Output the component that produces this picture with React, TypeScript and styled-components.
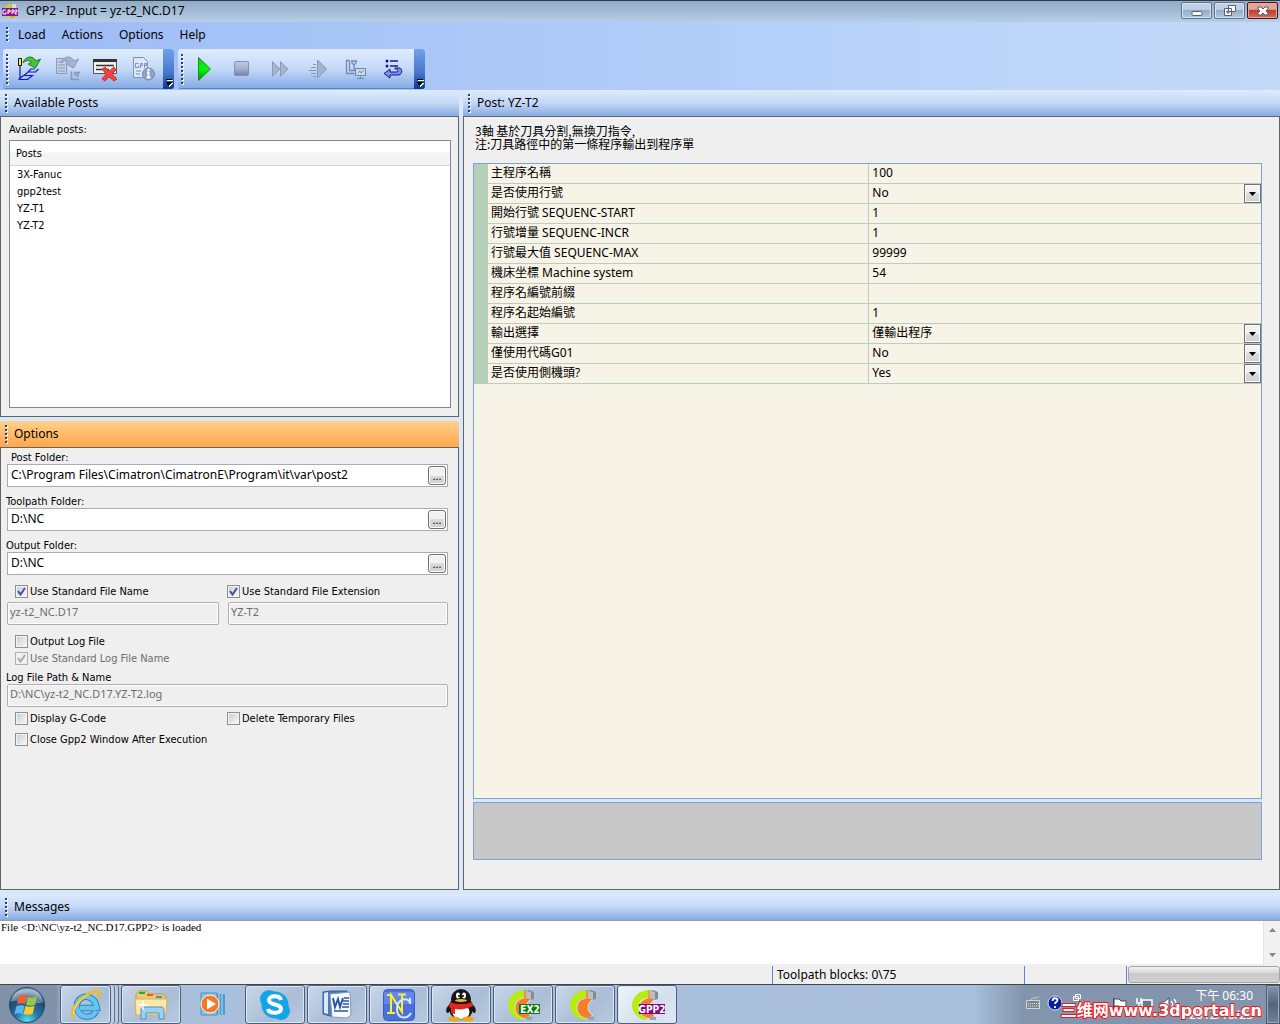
import React from "react";
import styled, { createGlobalStyle, css } from "styled-components";

const uiFont = `"Noto Sans", "Noto Sans CJK TC", sans-serif`;
const labelFont = `"DejaVu Sans Condensed", "Noto Sans CJK TC", sans-serif`;
const cjkFont = `"Noto Sans CJK TC", sans-serif`;

const GlobalStyle = createGlobalStyle`
  *, *::before, *::after { box-sizing: border-box; }
  body { margin: 0; background: #efefef; color: #000; font: 12px/16px ${uiFont}; }
  button, input, select { font: inherit; color: inherit; margin: 0; padding: 0; border: 0; border-radius: 0; }
  svg { display: block; }
`;

const Screen = styled.div`
  min-height: 100vh;
  display: flex;
  flex-direction: column;
`;

/* ---------- title bar ---------- */
const TitleBar = styled.header`
  height: 22px;
  flex: none;
  display: flex;
  align-items: flex-start;
  gap: 6px;
  padding: 1px 2px 0 0;
  border-top: 1px solid #36383c;
  background: linear-gradient(#8fabc8, #b7cee6);
`;
const WindowTitle = styled.h1`
  flex: 1;
  margin: 0;
  font-size: 12px;
  font-weight: 400;
  line-height: 17px;
`;
const WindowButtons = styled.div`
  display: flex;
  gap: 2px;
`;
const WindowButton = styled.button<{ $danger?: boolean }>`
  width: 31px;
  height: 17px;
  display: grid;
  place-items: center;
  border: 1px solid ${(p) => (p.$danger ? "#4f0f1c" : "#5f7291")};
  border-radius: 2px;
  box-shadow: inset 0 0 0 1px ${(p) => (p.$danger ? "#e8a79c" : "#d6e3f1")};
  background: ${(p) =>
    p.$danger
      ? "linear-gradient(#e3a397 0 42%, #b8432c 50%, #cf6f58)"
      : "linear-gradient(#bdd0e4 0 42%, #93aeca 50%, #b3cade)"};
`;

/* ---------- menu and tool bars ---------- */
const CommandArea = styled.div`
  flex: none;
  padding-bottom: 1px;
  background: linear-gradient(90deg, #9dbcf5, #bad4f9 75%, #c4d9f8);
`;
const MenuBar = styled.nav`
  height: 27px;
  display: flex;
  align-items: center;
  padding: 0 0 2px 6px;
`;
const MenuItem = styled.button`
  padding: 0 8px;
  background: none;
  line-height: 20px;
`;
const Grip = styled.span<{ $size: number }>`
  width: 4px;
  flex: none;
  height: ${(p) => p.$size}px;
  background:
    repeating-linear-gradient(#27417c 0 2px, transparent 2px 4px) 0 0 / 2px 100% no-repeat,
    repeating-linear-gradient(transparent 0 1px, #fff 1px 3px, transparent 3px 4px) 1px 0 / 2px 100% no-repeat;
`;
const ToolBars = styled.div`
  display: flex;
  gap: 4px;
  padding-left: 3px;
`;
const ToolBar = styled.div`
  height: 40px;
  display: flex;
  align-items: center;
  padding-left: 3px;
  border-radius: 3px;
  overflow: hidden;
  background: linear-gradient(#dfecfe, #c4d9f7 50%, #86abe5 97%, #3f66b0);
`;
const ToolButton = styled.button`
  width: 38px;
  height: 38px;
  display: grid;
  place-items: center;
  background: none;
`;
const Overflow = styled.button`
  width: 11px;
  height: 40px;
  display: flex;
  align-items: flex-end;
  justify-content: center;
  margin-left: 1px;
  padding-bottom: 2px;
  background: linear-gradient(#72a1ec, #4577cb 60%, #0a3891);
`;

/* ---------- docked panels ---------- */
const Workspace = styled.main`
  flex: 1;
  display: grid;
  grid-template-columns: minmax(0, 459fr) minmax(0, 817fr);
  gap: 4px;
  background: #d9e7fb;
`;
const Column = styled.div`
  display: flex;
  flex-direction: column;
  gap: 4px;
`;
const Dock = styled.section<{ $grow?: boolean }>`
  display: flex;
  flex-direction: column;
  ${(p) => p.$grow && css`flex: 1;`}
`;
const DockTitle = styled.h2<{ $active?: boolean }>`
  height: 26px;
  flex: none;
  display: flex;
  align-items: center;
  gap: 5px;
  margin: 0;
  padding-left: 5px;
  font-size: 12px;
  font-weight: 400;
  border-radius: 3px 3px 0 0;
  background: ${(p) =>
    p.$active
      ? "linear-gradient(#ffd18b, #ffa64c)"
      : "linear-gradient(#ddebfd, #c3d8f6 50%, #86abe4)"};
`;
const DockBody = styled.div`
  flex: 1;
  display: flex;
  flex-direction: column;
  border: 1px solid #646464;
  background: #efefef;
  font-size: 11px;
  line-height: 14px;
`;
const PostsBody = styled(DockBody)`
  padding: 6px 7px 8px 8px;
  font-family: ${labelFont};
`;
const PostList = styled.div`
  height: 268px;
  margin-top: 3px;
  border: 1px solid #828790;
  background: #fff;
`;
const PostTable = styled.table`
  width: 100%;
  border-collapse: separate;
  border-spacing: 0;
  th, td { text-align: left; font-weight: 400; padding: 1px 7px 0; height: 17px; }
  th { height: 25px; padding: 2px 6px 0; border-bottom: 1px solid #d5d5d5; background: linear-gradient(#fff 45%, #f2f3f5 50%); }
`;

/* ---------- options form ---------- */
const OptionsBody = styled(DockBody)`
  padding: 2px 10px 0 5px;
`;
const Field = styled.div`
  display: flex;
  flex-direction: column;
  margin-bottom: 7px;
`;
const FieldLabel = styled.label<{ $indent?: boolean }>`
  height: 14px;
  padding: 1px 0 0 ${(p) => (p.$indent ? 5 : 0)}px;
  font-family: ${labelFont};
`;
const PathBox = styled.div`
  height: 23px;
  display: flex;
  align-items: center;
  margin-left: 1px;
  padding: 0 1px 0 3px;
  border: 1px solid #abadb3;
  background: #fff;
`;
const PathInput = styled.input`
  flex: 1;
  min-width: 0;
  padding-bottom: 2px;
  background: none;
  font-size: 12px;
  line-height: 18px;
`;
const BrowseButton = styled.button`
  width: 18px;
  height: 19px;
  border: 1px solid #707070;
  border-radius: 3px;
  box-shadow: inset 0 0 0 1px #fbfbfb;
  background: linear-gradient(#f2f2f2 50%, #dcdcdc 50%, #cfcfcf);
  line-height: 16px;
`;
const Pair = styled.div`
  display: grid;
  grid-template-columns: 1fr 1fr;
`;
const ReadOnlyBox = styled.input`
  min-width: 0;
  height: 23px;
  margin-left: 1px;
  padding: 0 2px 4px;
  border: 1px solid #afafaf;
  border-radius: 2px;
  box-shadow: inset 0 0 0 1px #fff;
  background: #efefef;
  color: #6d6d6d;
`;
const NameBox = styled(ReadOnlyBox)`
  margin-right: 8px;
`;
const Checks = styled(Pair)<{ $top: number; $bottom?: number }>`
  margin-top: ${(p) => p.$top}px;
  margin-bottom: ${(p) => p.$bottom ?? 0}px;
`;
const CheckLabel = styled.label<{ $second?: boolean; $off?: boolean }>`
  height: 14px;
  display: flex;
  align-items: center;
  gap: 2px;
  padding-left: ${(p) => (p.$second ? 0 : 9)}px;
  font-family: ${labelFont};
  white-space: nowrap;
  color: ${(p) => (p.$off ? "#6d6d6d" : "#000")};
`;
const CheckText = styled.span`
  padding-top: 2px;
`;
const CheckFrame = styled.span`
  display: grid;
  place-items: center;
  > * { grid-area: 1 / 1; }
  svg { pointer-events: none; }
`;
const CheckInput = styled.input`
  appearance: none;
  width: 13px;
  height: 13px;
  border: 1px solid #8e8f8f;
  background: linear-gradient(135deg, #cbd0d6, #f6f6f6) content-box, #f4f4f4;
  padding: 1px;
  &:disabled { border-color: #b1b1b1; background: #f0f0f0; }
`;

/* ---------- post parameters ---------- */
const PostBody = styled(DockBody)`
  padding: 7px 17px 29px 9px;
`;
const PostNote = styled.p`
  margin: 0 2px 13px;
  font: 12px/13px ${cjkFont};
  white-space: pre-line;
`;
const ParameterArea = styled.div`
  flex: 1;
  border: 1px solid #7da2d6;
  background: #f7f3e7;
`;
const ParameterTable = styled.table`
  width: 100%;
  border-collapse: separate;
  border-spacing: 0;
  table-layout: fixed;
  border-left: 14px solid #b5d1b9;
  font-size: 12px;
  line-height: 18px;
  th, td { height: 20px; padding: 0 0 0 3px; text-align: left; font-weight: 400; border-bottom: 1px solid #b8cfbd; }
  th { width: 49.2%; padding-bottom: 2px; line-height: 17px; }
  td { border-left: 1px solid #b8cfbd; }
`;
const ValueInput = styled.input`
  display: block;
  width: 100%;
  height: 19px;
  padding-bottom: 2px;
  background: none;
`;
const Choice = styled.div`
  display: grid;
  > * { grid-area: 1 / 1; }
`;
const ValueSelect = styled.select`
  appearance: none;
  height: 19px;
  padding-bottom: 2px;
  background: none;
`;
const DropArrow = styled.span`
  width: 17px;
  height: 19px;
  display: grid;
  place-items: center;
  justify-self: end;
  border: 1px solid #707070;
  box-shadow: inset 0 0 0 1px #fcfcfc;
  background: linear-gradient(#f2f2f2 50%, #dcdcdc 50%, #cfcfcf);
  pointer-events: none;
`;
const HelpArea = styled.div`
  height: 58px;
  border: 1px solid #7da2d6;
  background: #c8c8c8;
  box-shadow: 0 -3px #d9e7fb;
  margin-top: 3px;
`;

/* ---------- messages and status ---------- */
const MessageDock = styled.section`
  flex: none;
  padding-top: 4px;
  background: #d9e7fb;
`;
const MessageBody = styled.div`
  height: 44px;
  display: flex;
  justify-content: space-between;
  border-top: 1px solid #9c9ca4;
  background: #fff;
  font: 11px/13px "Liberation Serif", serif;
`;
const MessageText = styled.span`
  padding-left: 1px;
`;
const ScrollTrack = styled.div`
  width: 17px;
  display: flex;
  flex-direction: column;
  justify-content: space-between;
  border-left: 1px solid #e4e4e4;
  background: #f1f1f1;
`;
const ScrollButton = styled.button`
  height: 18px;
  display: grid;
  place-items: center;
  background: none;
`;
const StatusBar = styled.footer`
  height: 20px;
  flex: none;
  display: flex;
  justify-content: flex-end;
  padding-top: 2px;
  background: #efefef;
`;
const StatusCell = styled.div<{ $width: number }>`
  width: ${(p) => p.$width}px;
  text-indent: 4px;
  line-height: 17px;
  border-left: 1px solid #5c87cf;
`;
const ProgressTrack = styled.div`
  width: 152px;
  height: 17px;
  margin-left: 1px;
  border: 1px solid #a5a5a5;
  border-radius: 3px;
  background: linear-gradient(#f0f0f0, #d8d8d8 40%, #c8c8c8 45%, #d3d3d3);
`;

/* ---------- task bar ---------- */
const TaskBar = styled.nav`
  position: relative;
  height: 40px;
  flex: none;
  display: flex;
  align-items: stretch;
  border-top: 1px solid #3d4653;
  background: linear-gradient(90deg, #8091aa 0 56px, #a9bfdb 64px, #a9bfdb 76%, #8395ac 80%);
  color: #fff;
`;
const StartButton = styled.button`
  width: 60px;
  padding-left: 8px;
  background: none;
`;
const TaskButton = styled.button<{ $bare?: boolean; $stack?: boolean; $active?: boolean }>`
  width: ${(p) => (p.$stack ? 51 : 60)}px;
  margin-right: ${(p) => (p.$stack ? 10 : 2)}px;
  display: grid;
  place-items: center;
  border-radius: 3px;
  background: none;
  ${(p) =>
    !p.$bare &&
    css`
      border: 1px solid #4d5e78;
      box-shadow: inset 0 0 0 1px #dbe6f3 ${p.$stack ? ", 3px 0 #c0d0e5, 4px 0 #60738f, 7px 0 #b8cae1, 8px 0 #60738f" : ""};
      background: linear-gradient(135deg, ${p.$active ? "#f0f4fa, #d3dfee 60%, #e0e9f4" : "#c9d7e8, #a9bdd7 60%, #b9cbe0"});
    `}
`;
const Tray = styled.div`
  margin-left: auto;
  display: flex;
  align-items: center;
  color: #fff;
`;
const Clock = styled.time`
  width: 72px;
  margin-right: 13px;
  text-align: right;
  line-height: 19px;
  white-space: nowrap;
`;
const ShowDesktop = styled.button`
  align-self: stretch;
  width: 14px;
  border: 1px solid #4e5c70;
  box-shadow: inset 0 0 0 1px #9aa9bd;
  background: linear-gradient(#8393a9, #55647a 50%, #718198);
`;
const Watermark = styled.span`
  position: absolute;
  right: 18px;
  bottom: 4px;
  font: bold 16px/18px "DejaVu Sans", "Noto Sans CJK SC", sans-serif;
  white-space: nowrap;
  color: #fff;
  -webkit-text-stroke: 2px #f01818;
  paint-order: stroke fill;
  pointer-events: none;
`;

/* ---------- drawings ---------- */
const GppLogo = () => (
  <svg width="20" height="18" viewBox="0 0 20 18">
    <circle cx="11" cy="9" r="7" fill="#b4e020" />
    <path d="M11 2a7 7 0 0 1 0 14z" fill="#f39a2b" />
    <path d="M12 2h4v4h-4z" fill="#ddd" />
    <rect x="2" y="6" width="16" height="8" fill="#8c138c" />
    <path d="M6 8H3v4h3v-2M8 12V8h2v2H8M12 12V8h2v2h-2M15 8h2v2h-2v2h2" fill="none" stroke="#fff" />
  </svg>
);
const MoreIcon = () => (
  <svg width="8" height="8" viewBox="0 0 8 8" shapeRendering="crispEdges">
    <path d="M2 1h6v1H2zM2 4h6v1H7v1H6v1H5v1H4V7H3V5z" fill="#fff" />
    <path d="M1 0h6v1H1zM1 3h6v1H6v1H5v1H4v1H3V6H2V4H1z" fill="#000" />
  </svg>
);
const GreenArrow = ({ gray }: { gray?: boolean }) => (
  <path
    d="M7 7C9 0 17 -1 20 5l4.500-2-5 9-7.500-4 3.500-1.500C14 4 10 4 7 7z"
    fill={gray ? "#a7b4cc" : "#4fbf3f"}
    stroke={gray ? "#8a98b4" : "#1d7f1c"}
    strokeWidth="1"
  />
);
const LoadPath = () => (
  <svg width="26" height="26" viewBox="0 0 26 26" fill="none">
    <path d="M2.500 2.500h3v7h-3z" fill="#ffee32" stroke="#111" />
    <path d="M4 10v13.500M2.500 23.500h9l5-4H8l4-3.500h7.500l3-3M2.500 23.500l5-4M12 16l3-3h4" stroke="#1018c0" strokeWidth="1.200" />
    <GreenArrow />
  </svg>
);
const ConvertIcon = () => (
  <svg width="26" height="26" viewBox="0 0 26 26" fill="none" stroke="#8998b5">
    <path d="M2.500 2.500h8l2 3v12h-10z" fill="#c4d0e4" />
    <path d="M4 6h5M4 9h7M4 12h7M4 15h7" strokeWidth="1.200" />
    <GreenArrow gray />
    <path d="M17.500 15.500v8H25M20 16.500h5l-1.500 2.500v2M20 17l2 2.500" strokeWidth="1.600" />
  </svg>
);
const DeleteIcon = () => (
  <svg width="26" height="26" viewBox="0 0 26 26">
    <path d="M1.500 3.500h23v14h-23z" fill="#f2f2f0" stroke="#555" />
    <path d="M1 3h24v3H1z" fill="#333" />
    <path d="M4 9.500h18M4 13.500h13" stroke="#333" strokeWidth="1.400" />
    <path d="M10 13l3-2 4 4 5-4 2 3-4 4 5 5-3 2-5-4-4 4-3-2 4-5z" fill="#ef4444" stroke="#c22" strokeWidth=".8" />
  </svg>
);
const GppInfo = () => (
  <svg width="26" height="26" viewBox="0 0 26 26" fill="none" stroke="#8090b0">
    <path d="M3.500 1.500h10l4 4v16h-14z" fill="#dde6f4" />
    <path d="M8.500 7.500h-3v4h3v-2M10.500 12V7.500h2v2h-2M14.500 12V7.500h2v2h-2M6 15h5M6 18h4" />
    <circle cx="18.500" cy="18" r="6" fill="#8ea2c6" stroke="#778bb0" />
    <path d="M17 16.500h1.500V21M16.500 21.500h4" stroke="#fff" strokeWidth="1.800" />
    <circle cx="18.500" cy="14" r="1.200" fill="#fff" stroke="none" />
  </svg>
);
const PlayIcon = () => (
  <svg width="26" height="26" viewBox="0 0 26 26">
    <defs>
      <linearGradient id="play" x1="0" y1="0" x2="0" y2="1">
        <stop offset="0" stopColor="#18c818" /><stop offset=".5" stopColor="#0f0" /><stop offset="1" stopColor="#078007" />
      </linearGradient>
    </defs>
    <path d="M7.500 1.500L19.500 13 7.500 24.500z" fill="url(#play)" stroke="#168a28" />
  </svg>
);
const StopIcon = () => (
  <svg width="26" height="26" viewBox="0 0 26 26">
    <defs>
      <linearGradient id="stop" x1="0" y1="0" x2="0" y2="1">
        <stop offset="0" stopColor="#bfcade" /><stop offset=".5" stopColor="#a5b1cb" /><stop offset="1" stopColor="#7284ad" />
      </linearGradient>
    </defs>
    <rect x="5.500" y="5.500" width="14" height="14" rx="1" fill="url(#stop)" stroke="#7f91b5" />
  </svg>
);
const ForwardIcon = () => (
  <svg width="26" height="26" viewBox="0 0 26 26" fill="#a6b3cd" stroke="#8d9cbc">
    <path d="M5.500 5.500L13 13l-7.500 7.500zM13.500 5.500L21 13l-7.500 7.500z" />
  </svg>
);
const StepIcon = () => (
  <svg width="26" height="26" viewBox="0 0 26 26" fill="#a6b3cd" stroke="#8495b8">
    <path d="M12.500 4L21.500 13l-9 9z" />
    <path d="M8 8.500h3M6 11.500h5M4 14.500h7M6 17.500h5M8 20.500h3" />
  </svg>
);
const MachineIcon = () => (
  <svg width="26" height="26" viewBox="0 0 26 26" fill="none" stroke="#7489b2">
    <path d="M6 4.500H3.500v13h8M6.500 4v10M8 5h6M9 5v2l2 2 2-2V5M11 9v5M6 14.500h6" strokeWidth="1.300" />
    <rect x="12.500" y="12.500" width="10" height="7" fill="#ccd7e8" />
    <path d="M15 17l2-2 1 2 3-3M17.500 20v2M14 22.500h7" />
  </svg>
);
const ReturnIcon = () => (
  <svg width="26" height="26" viewBox="0 0 26 26">
    <circle cx="6" cy="5" r="1.500" fill="#1414a4" /><circle cx="6" cy="10" r="1.500" fill="#1414a4" />
    <path d="M9 5h8M9 10h8" stroke="#1414a4" strokeWidth="1.500" />
    <path d="M14 12h5c3 2 2 6-1 7H9v3l-6-4.500L9 13v3h7c2-1 1-3-2-3z" fill="#7d93dc" stroke="#1414a4" />
  </svg>
);
const DownTriangle = () => (
  <svg width="7" height="4" viewBox="0 0 7 4"><path d="M0 0h7L3.500 4z" /></svg>
);
const Tick = ({ off }: { off?: boolean }) => (
  <svg width="13" height="13" viewBox="0 0 13 13">
    <path d="M3 6l2.500 3.500L10 3" fill="none" stroke={off ? "#a8a8a8" : "#3f559b"} strokeWidth="2" />
  </svg>
);
const StartOrb = () => (
  <svg width="38" height="38" viewBox="0 0 38 38">
    <defs>
      <radialGradient id="orb" cx=".5" cy=".95" r=".85">
        <stop offset="0" stopColor="#58e0f2" /><stop offset=".4" stopColor="#2277a5" /><stop offset=".8" stopColor="#24486e" /><stop offset="1" stopColor="#7f9db8" />
      </radialGradient>
    </defs>
    <circle cx="19" cy="19" r="17.500" fill="url(#orb)" stroke="#26445f" />
    <path d="M3 16C5 6 12 3 19 3s14 3 16 13C26 20 12 12 3 16z" fill="#fff" opacity=".3" />
    <path d="M11 10c3-2 5-1 8 0l-2 8c-3-1-5-1-8 0z" fill="#ef6131" />
    <path d="M20 11c3 1 6 1 9-1l-2 9c-3 1-6 1-9 0z" fill="#95ca42" />
    <path d="M8.500 20c3-1 6-1 8 0l-2 8c-3-1-5-1-8 0z" fill="#56b8ec" />
    <path d="M17.500 20c3 1 6 1 9 0l-2 8c-3 1-6 1-9 0z" fill="#fdc933" />
  </svg>
);
const ExplorerE = () => (
  <svg width="34" height="34" viewBox="0 0 34 34" fill="none">
    <path d="M27 23c-3 8-17 8-19-3-2-13 17-17 20 0H11" stroke="#2585c4" strokeWidth="6.500" />
    <path d="M27 23c-3 8-17 8-19-3-2-13 17-17 20 0H11" stroke="#67c4ef" strokeWidth="4.500" />
    <path d="M6 29C-1 27 7 13 18 7c9-6 15-5 11 3" stroke="#f0ba20" strokeWidth="3" />
    <path d="M5 27C2 23 10 12 18 7" stroke="#ffe373" />
  </svg>
);
const FolderIcon = () => (
  <svg width="36" height="34" viewBox="0 0 36 34">
    <path d="M3 6l3-3h8l2 3h14l3 3v17H3z" fill="#e9cb71" stroke="#c59d3a" />
    <path d="M6 4h6v2H6z" fill="#27a547" /><path d="M14 6h6v2h-6z" fill="#e35a38" /><path d="M23 8h6v2h-6z" fill="#3a90df" />
    <path d="M2 11h32l-1 16H3z" fill="#fae9a6" stroke="#d4b259" />
    <path d="M8 31V22c0-2 1-3 3-3h17c2 0 3 1 3 3v9h-5v-6H13v6z" fill="#9bd1f1" stroke="#4a94c7" />
    <path d="M10 12v10M5 17h10" stroke="#fff" strokeWidth="1.300" />
  </svg>
);
const MediaIcon = () => (
  <svg width="30" height="30" viewBox="0 0 30 30">
    <path d="M9 4h18v21H9z" fill="#4f9cc8" /><path d="M24 4v21M21 4v21" stroke="#b9dcef" />
    <path d="M3 3h16v22H3z" fill="#8bc1e0" stroke="#4d93bb" />
    <circle cx="12" cy="14" r="9" fill="#f47a22" stroke="#fff" />
    <path d="M9 8.500l9 5.500-9 5.500z" fill="#fff" />
  </svg>
);
const SkypeIcon = () => (
  <svg width="34" height="34" viewBox="0 0 34 34">
    <circle cx="11" cy="11" r="9" fill="#13a5e7" /><circle cx="23" cy="23" r="9" fill="#13a5e7" />
    <circle cx="17" cy="17" r="13.500" fill="#13a5e7" />
    <path d="M23 12c-1-5-12-5-12 0 0 6 12 3 12 9 0 5-12 5-13 0" fill="none" stroke="#fff" strokeWidth="4" />
  </svg>
);
const WordIcon = () => (
  <svg width="34" height="34" viewBox="0 0 34 34">
    <path d="M3 4l7-1h17v24l-17 1-7-2z" fill="#4d79bf" stroke="#3a5f9f" />
    <path d="M4 5l4-1v22l-4-1z" fill="#dce7f7" />
    <path d="M10 6l20-2 1 23-4 3-15-1z" fill="#f7faff" stroke="#8298bc" />
    <path d="M13 10l2 9 3-8 2 8 3-9" fill="none" stroke="#2a579f" strokeWidth="2" />
    <path d="M24 10h5M23 13h6M23 16h6M22 19h7M14 23h14" stroke="#2a579f" strokeWidth="1.400" />
  </svg>
);
const NcIcon = () => (
  <svg width="34" height="34" viewBox="0 0 34 34">
    <rect x="1.500" y="1.500" width="31" height="31" rx="4" fill="#4970dc" stroke="#3a5cc0" />
    <path d="M2 4h30v12H2z" fill="#7196f0" opacity=".6" />
    <path d="M9 25V7l11 17V6M5 25h8M16 6.500h8M5 7h4" fill="none" stroke="#ffef24" strokeWidth="2" />
    <path d="M28 15c-2-7-13-4-13 6s10 11 14 4M28 10v6" fill="none" stroke="#dce7ff" strokeWidth="2" />
  </svg>
);
const PenguinIcon = () => (
  <svg width="36" height="36" viewBox="0 0 36 36">
    <path d="M8 16C4 19 2 23 4 26c2 0 3-2 4-4M28 16c4 3 6 7 4 10-2 0-3-2-4-4" fill="#151515" />
    <ellipse cx="18" cy="21" rx="12" ry="12" fill="#171717" /><circle cx="18" cy="12" r="10" fill="#171717" />
    <ellipse cx="18" cy="25" rx="8.500" ry="7.500" fill="#fff" />
    <ellipse cx="11" cy="32" rx="6" ry="2.500" fill="#f5a418" /><ellipse cx="25" cy="32" rx="6" ry="2.500" fill="#f5a418" />
    <ellipse cx="15" cy="8.500" rx="2" ry="3" fill="#fff" /><ellipse cx="21" cy="8.500" rx="2" ry="3" fill="#fff" />
    <circle cx="16" cy="9" r="1" /><circle cx="20" cy="9" r="1" />
    <ellipse cx="18" cy="13.500" rx="6" ry="1.500" fill="#f7b51e" />
    <path d="M7 15c7 3 15 3 22 0l1 4c-6 3-13 4-18 3v5l-4-1v-5l-2-1z" fill="#e32522" />
  </svg>
);
const TagText = styled.text`
  font: bold 10px "DejaVu Sans Condensed", sans-serif;
  fill: #fff;
`;
const Cimatron = ({ tag, color }: { tag?: string; color?: string }) => (
  <svg width="38" height="36" viewBox="0 0 38 36">
    <path d="M20 3C10 4 4 11 4 18s6 14 14 15l3-3c-6-2-10-6-10-12 0-4 3-7 9-7z" fill="#b6ed0e" />
    <path d="M29 12c-4 1-7 4-7 8 0 4 2 7 5 8l-5 4c-6-1-11-5-11-11 0-7 6-11 16-11z" fill="#f67e29" stroke="#e3ebf3" strokeWidth=".8" />
    <path d="M22 4l5 1v8l-5-2z" fill="#b9bec3" /><path d="M22 4l3-1 5 2v7l-3 1V5z" fill="#858b92" />
    <path d="M22 29l6 1v3h-6z" fill="#9ca2a8" />
    <path d="M21 3v8" stroke="#f67e29" strokeWidth="1.500" />
    {tag && <rect x={tag.length > 3 ? 11 : 15} y="17" width={tag.length > 3 ? 26 : 21} height="10" fill={color} />}
    {tag && <TagText x={tag.length > 3 ? 24 : 26} y="26" textAnchor="middle">{tag}</TagText>}
  </svg>
);
const TrayIcons = () => (
  <svg width="156" height="38" viewBox="0 0 156 38" fill="none" stroke="#e4e8ed">
    <path d="M6 14c1-4 5 0 8-4M1.500 14.500h13v8h-13z" fill="#7c848c" stroke="#d2d5d8" />
    <path d="M3 17.500h11M3 20h11" strokeDasharray="1 1" />
    <circle cx="30" cy="17" r="7" fill="#0a1ea5" stroke="#d9ddeb" />
    <path d="M27.500 15c0-4 5-3 5-1 0 2-2.500 2-2.500 4M30 20v2" stroke="#fff" strokeWidth="1.800" />
    <path d="M50.500 8.500h5v4h-5zM48.500 10.500h5v4h-5z" fill="#8395ac" stroke="#fff" />
    <path d="M68 20l4-4 4 4z" fill="#fff" />
    <path d="M88.500 12v14M89 13h5l2 2h5v7h-5l-2-2h-5z" fill="#fff" stroke="#3f4b5b" />
    <path d="M117 14h10v9h-10z" fill="#6b7888" stroke="#fff" strokeWidth="1.500" /><path d="M112 12v5h4v-5M114 17v8h5" stroke="#fff" strokeWidth="1.500" />
    <path d="M136 16h3l5-4v13l-5-4h-3z" fill="#fff" stroke="#49576a" /><path d="M146 15c2 2 2 5 0 7M149 13c3 3 3 8 0 11" stroke="#fff" strokeWidth="1.400" />
  </svg>
);

/* ---------- data ---------- */
const posts = ["3X-Fanuc", "gpp2test", "YZ-T1", "YZ-T2"];
const folders = [
  { label: "Post Folder:", value: "C:\\Program Files\\Cimatron\\CimatronE\\Program\\it\\var\\post2", indent: true },
  { label: "Toolpath Folder:", value: "D:\\NC" },
  { label: "Output Folder:", value: "D:\\NC" },
];
const parameters: { name: string; value: string; options?: string[] }[] = [
  { name: "主程序名稱", value: "100" },
  { name: "是否使用行號", value: "No", options: ["No", "Yes"] },
  { name: "開始行號 SEQUENC-START", value: "1" },
  { name: "行號增量 SEQUENC-INCR", value: "1" },
  { name: "行號最大值 SEQUENC-MAX", value: "99999" },
  { name: "機床坐標 Machine system", value: "54" },
  { name: "程序名編號前綴", value: "" },
  { name: "程序名起始編號", value: "1" },
  { name: "輸出選擇", value: "僅輸出程序", options: ["僅輸出程序"] },
  { name: "僅使用代碼G01", value: "No", options: ["No", "Yes"] },
  { name: "是否使用側機頭?", value: "Yes", options: ["No", "Yes"] },
];
const fileTools = [
  { name: "Load toolpath", icon: <LoadPath /> },
  { name: "Convert", icon: <ConvertIcon /> },
  { name: "Clear", icon: <DeleteIcon /> },
  { name: "Post information", icon: <GppInfo /> },
];
const runTools = [
  { name: "Run", icon: <PlayIcon /> },
  { name: "Stop", icon: <StopIcon /> },
  { name: "Fast forward", icon: <ForwardIcon /> },
  { name: "Step", icon: <StepIcon /> },
  { name: "Machine", icon: <MachineIcon /> },
  { name: "Return", icon: <ReturnIcon /> },
];
const tasks = [
  { name: "Internet Explorer", icon: <ExplorerE />, stack: true },
  { name: "Explorer", icon: <FolderIcon /> },
  { name: "Media Player", icon: <MediaIcon />, bare: true },
  { name: "Skype", icon: <SkypeIcon /> },
  { name: "Word", icon: <WordIcon /> },
  { name: "NC", icon: <NcIcon /> },
  { name: "QQ", icon: <PenguinIcon /> },
  { name: "EX2", icon: <Cimatron tag="EX2" color="#0b7d14" /> },
  { name: "Cimatron", icon: <Cimatron /> },
  { name: "GPP2", icon: <Cimatron tag="GPP2" color="#7c0a7c" />, active: true },
];

function Tools({ name, tools }: { name: string; tools: { name: string; icon: React.ReactNode }[] }) {
  return (
    <ToolBar role="toolbar" aria-label={name}>
      <Grip $size={31} />
      {tools.map((t) => (
        <ToolButton key={t.name} aria-label={t.name}>{t.icon}</ToolButton>
      ))}
      <Overflow aria-label="More buttons"><MoreIcon /></Overflow>
    </ToolBar>
  );
}

function CheckBox({ label, checked, second, off }: { label: string; checked?: boolean; second?: boolean; off?: boolean }) {
  return (
    <CheckLabel $second={second} $off={off}>
      <CheckFrame>
        <CheckInput type="checkbox" defaultChecked={checked} disabled={off} />
        {checked && <Tick off={off} />}
      </CheckFrame>
      <CheckText>{label}</CheckText>
    </CheckLabel>
  );
}

export default function App() {
  return (
    <Screen>
      <GlobalStyle />
      <TitleBar>
        <GppLogo />
        <WindowTitle>GPP2 - Input = yz-t2_NC.D17</WindowTitle>
        <WindowButtons>
          <WindowButton aria-label="Minimize">
            <svg width="12" height="11" viewBox="0 0 12 11"><rect x="1" y="6.500" width="10" height="4" rx="1" fill="#fff" stroke="#566174" /></svg>
          </WindowButton>
          <WindowButton aria-label="Restore">
            <svg width="12" height="11" viewBox="0 0 12 11" fill="#fff" stroke="#566174"><path d="M4.500.5h7v6h-7zM.5 3.500h7v7h-7zM3 6h2v2H3z" /></svg>
          </WindowButton>
          <WindowButton $danger aria-label="Close">
            <svg width="12" height="10" viewBox="0 0 12 10"><path d="M1 1h3l2 2 2-2h3v2L9 5l2 2v2H8L6 7 4 9H1V7l2-2-2-2z" fill="#fff" stroke="#565b68" /></svg>
          </WindowButton>
        </WindowButtons>
      </TitleBar>

      <CommandArea>
        <MenuBar>
          <Grip $size={15} />
          {["Load", "Actions", "Options", "Help"].map((m) => <MenuItem key={m}>{m}</MenuItem>)}
        </MenuBar>
        <ToolBars>
          <Tools name="File" tools={fileTools} />
          <Tools name="Run" tools={runTools} />
        </ToolBars>
      </CommandArea>

      <Workspace>
        <Column>
          <Dock>
            <DockTitle><Grip $size={19} />Available Posts</DockTitle>
            <PostsBody>
              Available posts:
              <PostList>
                <PostTable>
                  <thead><tr><th>Posts</th></tr></thead>
                  <tbody>{posts.map((p) => <tr key={p}><td>{p}</td></tr>)}</tbody>
                </PostTable>
              </PostList>
            </PostsBody>
          </Dock>
          <Dock $grow>
            <DockTitle $active><Grip $size={19} />Options</DockTitle>
            <OptionsBody>
              {folders.map((f, i) => (
                <Field key={f.label}>
                  <FieldLabel htmlFor={`folder${i}`} $indent={f.indent}>{f.label}</FieldLabel>
                  <PathBox>
                    <PathInput id={`folder${i}`} defaultValue={f.value} />
                    <BrowseButton aria-label={`Browse ${f.label}`}>...</BrowseButton>
                  </PathBox>
                </Field>
              ))}
              <Checks $top={2} $bottom={4}>
                <CheckBox label="Use Standard File Name" checked />
                <CheckBox label="Use Standard File Extension" checked second />
              </Checks>
              <Pair>
                <NameBox aria-label="File name" disabled defaultValue="yz-t2_NC.D17" />
                <ReadOnlyBox aria-label="File extension" disabled defaultValue="YZ-T2" />
              </Pair>
              <Checks $top={9} $bottom={3}><CheckBox label="Output Log File" /></Checks>
              <Checks $top={0} $bottom={5}><CheckBox label="Use Standard Log File Name" checked off /></Checks>
              <FieldLabel htmlFor="log">Log File Path &amp; Name</FieldLabel>
              <ReadOnlyBox id="log" disabled defaultValue="D:\NC\yz-t2_NC.D17.YZ-T2.log" />
              <Checks $top={4} $bottom={7}>
                <CheckBox label="Display G-Code" />
                <CheckBox label="Delete Temporary Files" second />
              </Checks>
              <Checks $top={0}><CheckBox label="Close Gpp2 Window After Execution" /></Checks>
            </OptionsBody>
          </Dock>
        </Column>

        <Dock $grow>
          <DockTitle><Grip $size={19} />Post: YZ-T2</DockTitle>
          <PostBody>
            <PostNote>{"3軸 基於刀具分割,無換刀指令,\n注:刀具路徑中的第一條程序輸出到程序單"}</PostNote>
            <ParameterArea>
              <ParameterTable>
                <tbody>
                  {parameters.map((p, i) => (
                    <tr key={p.name}>
                      <th scope="row"><label htmlFor={`param${i}`}>{p.name}</label></th>
                      <td>
                        {p.options ? (
                          <Choice>
                            <ValueSelect id={`param${i}`} defaultValue={p.value}>
                              {p.options.map((o) => <option key={o}>{o}</option>)}
                            </ValueSelect>
                            <DropArrow><DownTriangle /></DropArrow>
                          </Choice>
                        ) : (
                          <ValueInput id={`param${i}`} defaultValue={p.value} />
                        )}
                      </td>
                    </tr>
                  ))}
                </tbody>
              </ParameterTable>
            </ParameterArea>
            <HelpArea />
          </PostBody>
        </Dock>
      </Workspace>

      <MessageDock>
        <DockTitle><Grip $size={19} />Messages</DockTitle>
        <MessageBody>
          <MessageText>{"File <D:\\NC\\yz-t2_NC.D17.GPP2> is loaded"}</MessageText>
          <ScrollTrack>
            <ScrollButton aria-label="Scroll up"><svg width="7" height="4" viewBox="0 0 7 4"><path d="M0 4h7L3.500 0z" fill="#888" /></svg></ScrollButton>
            <ScrollButton aria-label="Scroll down"><svg width="7" height="4" viewBox="0 0 7 4"><path d="M0 0h7L3.500 4z" fill="#888" /></svg></ScrollButton>
          </ScrollTrack>
        </MessageBody>
      </MessageDock>
      <StatusBar>
        <StatusCell $width={252}>Toolpath blocks: 0\75</StatusCell>
        <StatusCell $width={102} />
        <StatusCell $width={1} />
        <ProgressTrack role="progressbar" aria-label="Progress" />
      </StatusBar>

      <TaskBar>
        <StartButton aria-label="Start"><StartOrb /></StartButton>
        {tasks.map((t) => (
          <TaskButton key={t.name} aria-label={t.name} $stack={t.stack} $bare={t.bare} $active={t.active}>{t.icon}</TaskButton>
        ))}
        <Tray>
          <TrayIcons />
          <Clock>下午 06:30<br />2012/10/23</Clock>
          <ShowDesktop aria-label="Show desktop" />
        </Tray>
        <Watermark>三维网www.3dportal.cn</Watermark>
      </TaskBar>
    </Screen>
  );
}
